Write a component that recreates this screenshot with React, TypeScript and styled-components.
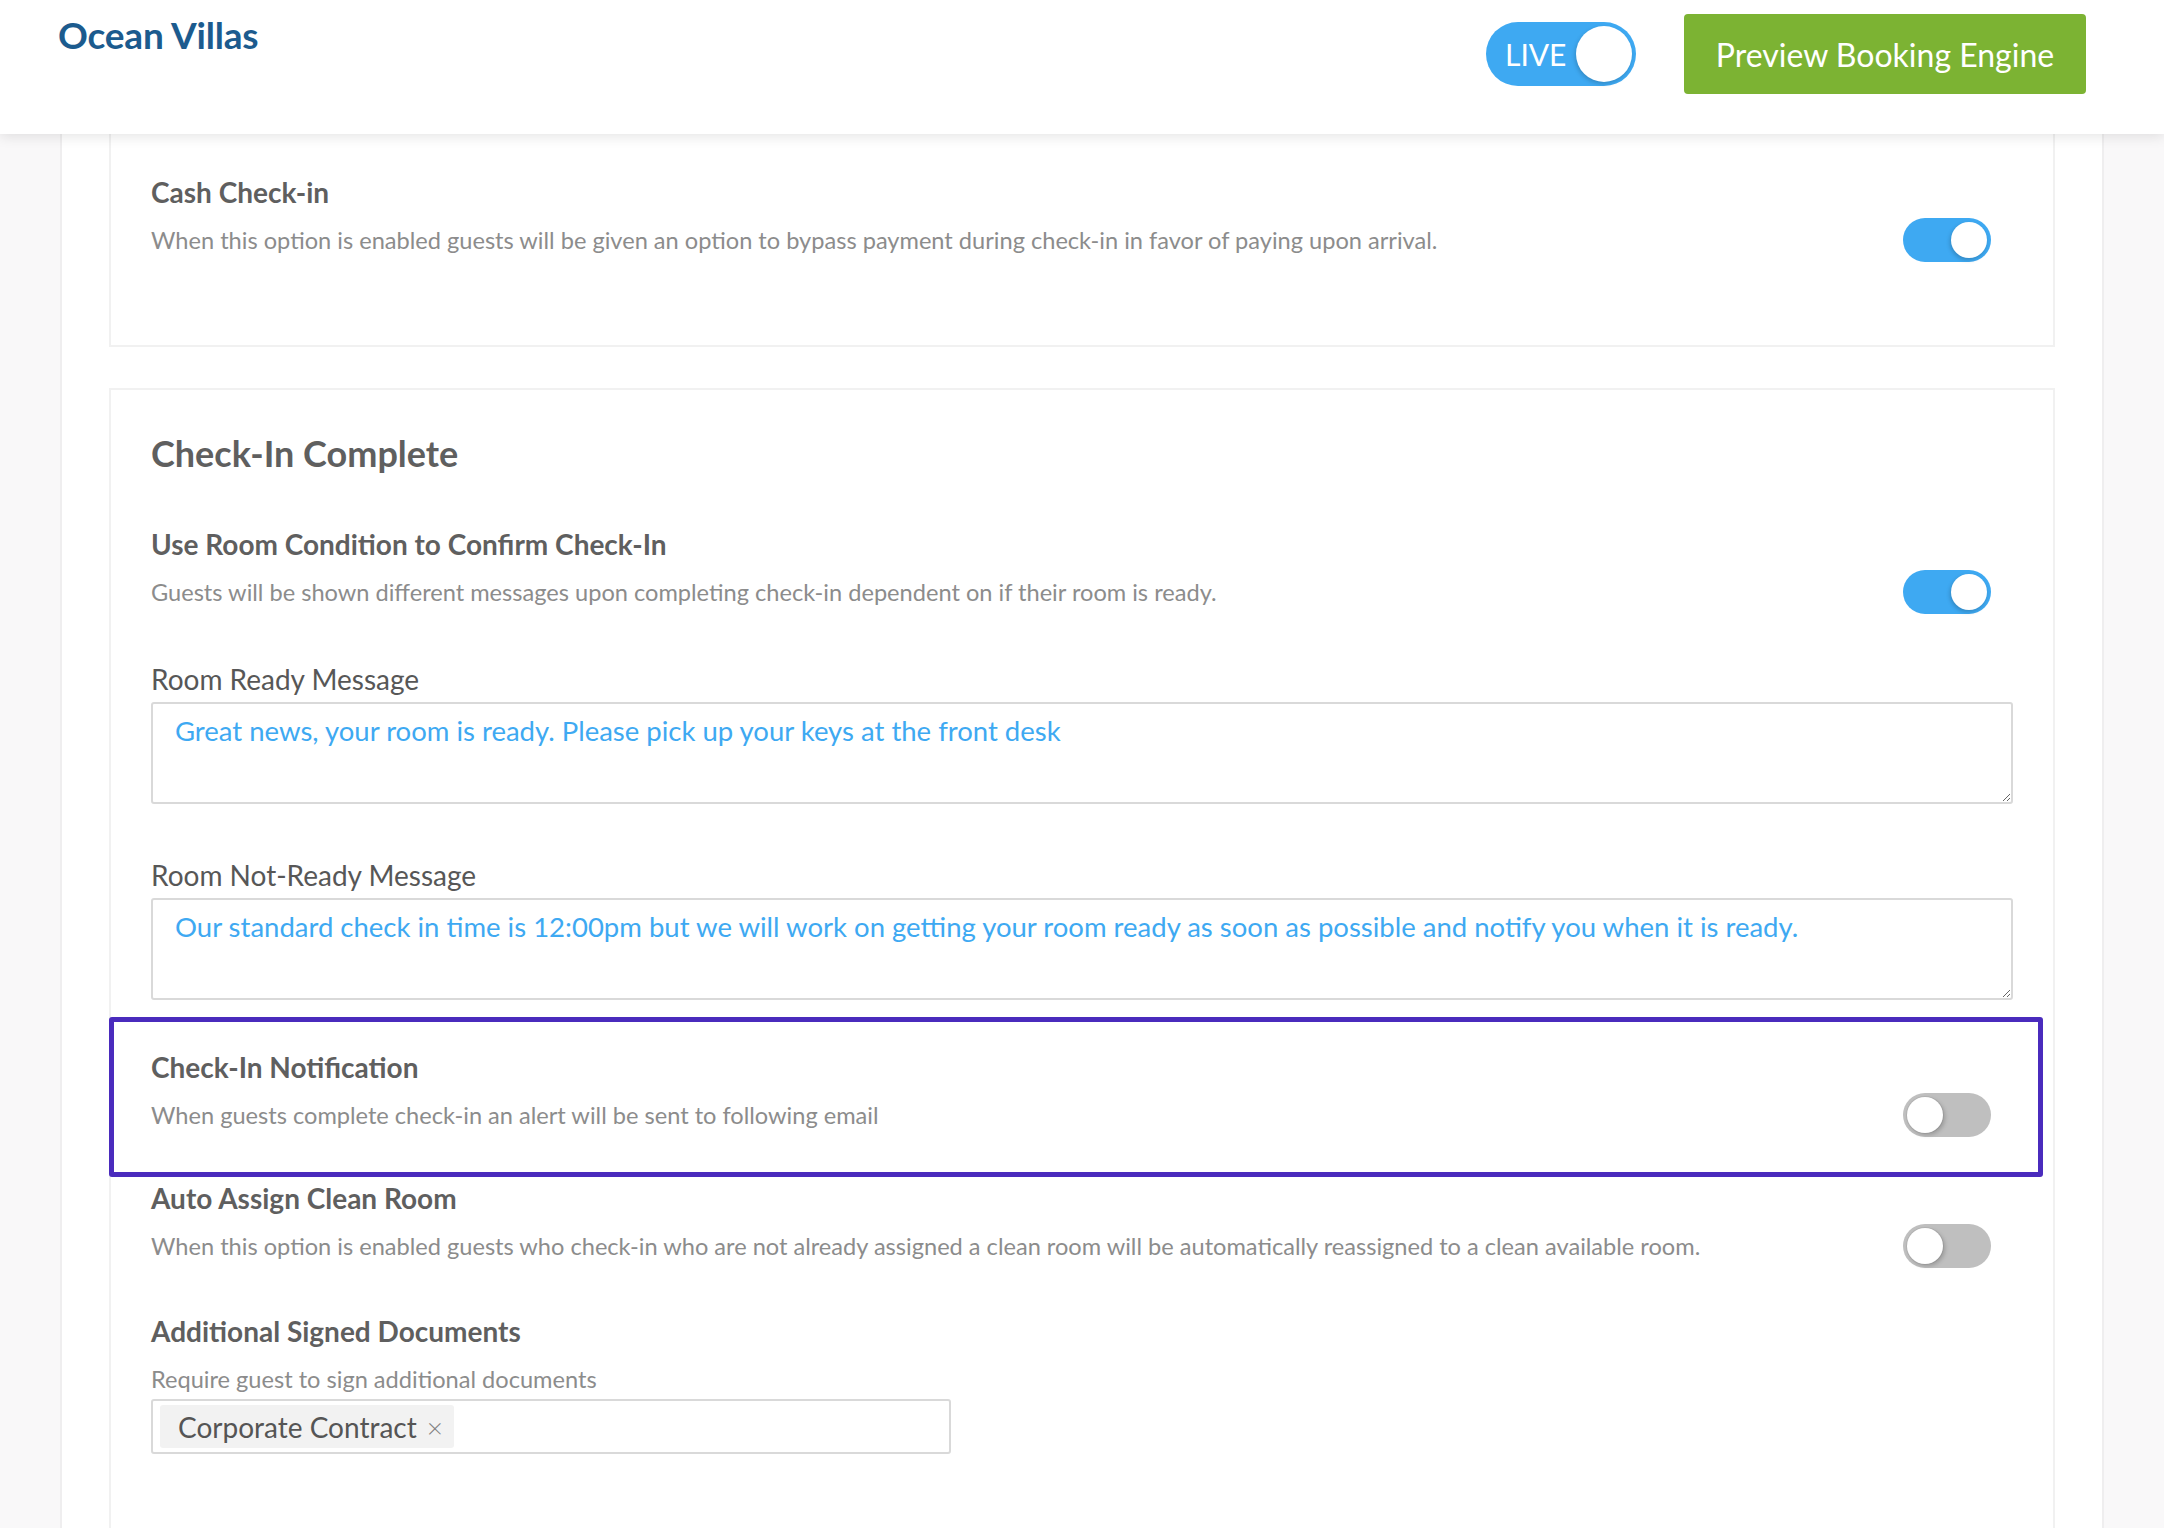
import styled, { createGlobalStyle } from 'styled-components';

const GlobalStyle = createGlobalStyle`
  html, body {
    margin: 0;
    padding: 0;
    background: #f9f8f9;
    font-family: Lato, "Open Sans", Arial, sans-serif;
  }
  * {
    box-sizing: border-box;
  }
`;

const Header = styled.header`
  position: relative;
  z-index: 2;
  height: 134px;
  display: flex;
  justify-content: space-between;
  align-items: flex-start;
  padding: 13px 78px 0 58px;
  background: #fff;
  box-shadow: 0 3px 12px rgba(0, 0, 0, 0.1);
`;

const Brand = styled.h1`
  margin: 0;
  font-size: 37px;
  line-height: 44px;
  font-weight: 700;
  color: #1c5b8e;
  letter-spacing: -0.2px;
`;

const HeaderActions = styled.div`
  display: flex;
  align-items: center;
  gap: 48px;
  margin-top: 1px;
`;

const LiveSwitch = styled.div`
  width: 150px;
  height: 64px;
  border-radius: 32px;
  background: #3ea9f2;
  display: flex;
  align-items: center;
  justify-content: space-between;
  padding: 0 4px 0 19px;
  color: #fff;
  font-size: 30px;
  line-height: 1;
`;

const LiveKnob = styled.span`
  width: 56px;
  height: 56px;
  border-radius: 50%;
  background: #fff;
  box-shadow: -1px 2px 4px rgba(0, 0, 0, 0.18);
`;

const PreviewButton = styled.button`
  width: 402px;
  height: 80px;
  border: none;
  border-radius: 4px;
  background: #7cb333;
  color: #fff;
  font-family: inherit;
  font-size: 32px;
  cursor: pointer;
`;

const Panel = styled.main`
  margin: 0 60px;
  width: 2044px;
  background: #fff;
  border-left: 2px solid #efeeef;
  border-right: 2px solid #efeeef;
  padding: 0 47px 0;
`;

const Card = styled.section<{ $first?: boolean }>`
  border: 2px solid #f1f1f1;
  border-top: ${(p) => (p.$first ? 'none' : '2px solid #f1f1f1')};
  padding: ${(p) => (p.$first ? '41px 40px 83px' : '41px 40px 90px')};
  margin-top: ${(p) => (p.$first ? '0' : '41px')};
  background: #fff;
`;

const SectionHeading = styled.h2`
  margin: 0 0 52px;
  font-size: 36px;
  line-height: 44px;
  font-weight: 700;
  color: #5f5f5f;
`;

const SettingTitle = styled.h3<{ $gap?: number }>`
  margin: ${(p) => p.$gap ?? 0}px 0 0;
  font-size: 28px;
  line-height: 34px;
  font-weight: 700;
  color: #5f5f5f;
`;

const SettingRow = styled.div`
  display: flex;
  align-items: center;
  justify-content: space-between;
  margin-top: 9px;
  min-height: 44px;
`;

const Description = styled.p<{ $gap?: number }>`
  margin: ${(p) => p.$gap ?? 0}px 0 0;
  font-size: 23.6px;
  line-height: 32px;
  color: #8c8c8c;
`;

const Switch = styled.span<{ $on?: boolean }>`
  flex: none;
  width: 88px;
  height: 44px;
  margin-right: 22px;
  border-radius: 22px;
  padding: 4px;
  display: flex;
  justify-content: ${(p) => (p.$on ? 'flex-end' : 'flex-start')};
  background: ${(p) => (p.$on ? '#3ea9f2' : '#bfbfbf')};
`;

const SwitchKnob = styled.span<{ $on?: boolean }>`
  width: 36px;
  height: 36px;
  border-radius: 50%;
  background: #fff;
  box-shadow: ${(p) =>
    p.$on
      ? '-1px 2px 4px rgba(0, 0, 0, 0.2)'
      : '0 0 0 1px rgba(0, 0, 0, 0.06), 2px 2px 4px rgba(0, 0, 0, 0.2)'};
`;

const FieldLabel = styled.label<{ $gap: number }>`
  display: block;
  margin-top: ${(p) => p.$gap}px;
  font-size: 28px;
  line-height: 34px;
  color: #575757;
`;

const MessageBox = styled.textarea`
  display: block;
  width: 100%;
  height: 102px;
  margin-top: 6px;
  padding: 10px 22px;
  border: 2px solid #d9d9d9;
  border-radius: 3px;
  font-family: Lato, "Open Sans", Arial, sans-serif;
  font-size: 27.5px;
  line-height: 34px;
  color: #3ea9f2;
  background: #fff;
  outline: none;
`;

const Highlight = styled.div`
  margin: 17px -30px 0 -42px;
  padding: 28px 25px 35px 37px;
  border: 5px solid #4a2bbd;
  border-radius: 3px;
`;

const TagInput = styled.div`
  width: 800px;
  height: 55px;
  margin-top: 4px;
  padding: 4px 7px;
  border: 2px solid #d9d9d9;
  border-radius: 3px;
  display: flex;
  align-items: flex-start;
`;

const Tag = styled.span`
  display: inline-flex;
  align-items: center;
  gap: 10px;
  height: 43px;
  padding: 0 11px 0 18px;
  border-radius: 3px;
  background: #f2f2f2;
  font-size: 28px;
  color: #555;
`;

const TagRemove = styled.span`
  font-size: 28px;
  line-height: 1;
  color: #808080;
  font-weight: 300;
`;

type ToggleProps = { on?: boolean };

const Toggle = ({ on }: ToggleProps) => (
  <Switch $on={on}>
    <SwitchKnob $on={on} />
  </Switch>
);

export default function App() {
  return (
    <>
      <GlobalStyle />
      <Header>
        <Brand>Ocean Villas</Brand>
        <HeaderActions>
          <LiveSwitch>
            LIVE
            <LiveKnob />
          </LiveSwitch>
          <PreviewButton>Preview Booking Engine</PreviewButton>
        </HeaderActions>
      </Header>

      <Panel>
        <Card $first>
          <SettingTitle>Cash Check-in</SettingTitle>
          <SettingRow>
            <Description>
              When this option is enabled guests will be given an option to bypass payment during
              check-in in favor of paying upon arrival.
            </Description>
            <Toggle on />
          </SettingRow>
        </Card>

        <Card>
          <SectionHeading>Check-In Complete</SectionHeading>
          <SettingTitle>Use Room Condition to Confirm Check-In</SettingTitle>
          <SettingRow>
            <Description>
              Guests will be shown different messages upon completing check-in dependent on if their
              room is ready.
            </Description>
            <Toggle on />
          </SettingRow>

          <FieldLabel $gap={48}>Room Ready Message</FieldLabel>
          <MessageBox
            readOnly
            defaultValue="Great news, your room is ready. Please pick up your keys at the front desk"
          />

          <FieldLabel $gap={54}>Room Not-Ready Message</FieldLabel>
          <MessageBox
            readOnly
            defaultValue="Our standard check in time is 12:00pm but we will work on getting your room ready as soon as possible and notify you when it is ready."
          />

          <Highlight>
            <SettingTitle>Check-In Notification</SettingTitle>
            <SettingRow>
              <Description>
                When guests complete check-in an alert will be sent to following email
              </Description>
              <Toggle />
            </SettingRow>
          </Highlight>

          <SettingTitle $gap={4}>Auto Assign Clean Room</SettingTitle>
          <SettingRow>
            <Description>
              When this option is enabled guests who check-in who are not already assigned a clean
              room will be automatically reassigned to a clean available room.
            </Description>
            <Toggle />
          </SettingRow>

          <SettingTitle $gap={46}>Additional Signed Documents</SettingTitle>
          <Description $gap={15}>Require guest to sign additional documents</Description>
          <TagInput>
            <Tag>
              Corporate Contract
              <TagRemove>×</TagRemove>
            </Tag>
          </TagInput>
        </Card>
      </Panel>
    </>
  );
}
